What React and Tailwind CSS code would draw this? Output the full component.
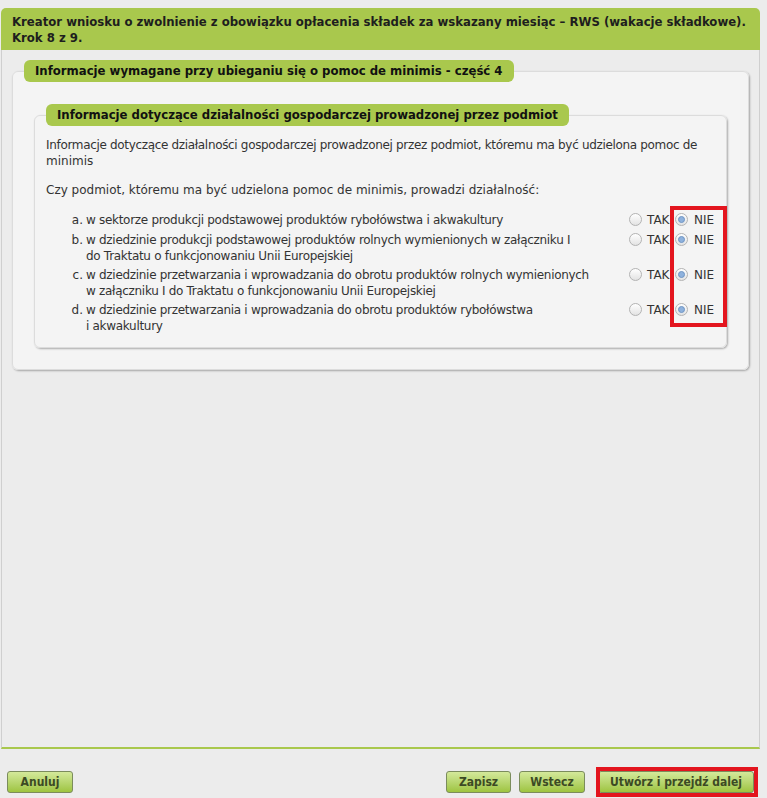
import React from 'react';

const items = [
  { mark: 'a.', lines: ['w sektorze produkcji podstawowej produktów rybołówstwa i akwakultury'] },
  { mark: 'b.', lines: ['w dziedzinie produkcji podstawowej produktów rolnych wymienionych w załączniku I', 'do Traktatu o funkcjonowaniu Unii Europejskiej'] },
  { mark: 'c.', lines: ['w dziedzinie przetwarzania i wprowadzania do obrotu produktów rolnych wymienionych', 'w załączniku I do Traktatu o funkcjonowaniu Unii Europejskiej'] },
  { mark: 'd.', lines: ['w dziedzinie przetwarzania i wprowadzania do obrotu produktów rybołówstwa', 'i akwakultury'] },
];

const boldFont = "font-['DejaVu_Sans_Condensed','Liberation_Sans',sans-serif] font-bold";

const Radio = ({ checked }) => (
  <span className="mt-[1px] flex h-[13px] w-[13px] shrink-0 items-center justify-center rounded-full border border-[#b3b3b3] bg-gradient-to-b from-[#ffffff] to-[#e3e3e3]">
    {checked && <span className="h-[7px] w-[7px] rounded-full border border-[#6f95c4] bg-[#8fb2dd]" />}
  </span>
);

const Button = ({ children, w }) => (
  <button
    className={`${w} h-[22px] rounded-[3px] border border-[#7b8c5c] bg-gradient-to-b from-[#d4e99a] to-[#9ec43e] text-[12px] text-[#3c4a24] ${boldFont}`}
  >
    {children}
  </button>
);

export default function App() {
  return (
    <div className="relative min-h-[798px] bg-[#ececec] font-['DejaVu_Sans',sans-serif] text-[12px] text-[#333]">
      <div className="w-[760px] pl-[1px] pt-[8px]">
        {/* Header */}
        <div className={`rounded-t-[5px] bg-[#a9c84d] pb-[4px] pl-[11px] pr-[8px] pt-[6px] text-[13px] leading-[16px] text-[#1e1e1e] ${boldFont}`}>
          Kreator wniosku o zwolnienie z obowiązku opłacenia składek za wskazany miesiąc – RWS (wakacje składkowe).
          <br />
          Krok 8 z 9.
        </div>

        {/* Body */}
        <div className="h-[699px] border-x border-b-2 border-x-[#cfcfcf] border-b-[#a9c84d] bg-[#ececec] px-[10px] pt-[10px]">
          <fieldset className="min-w-0 rounded-[6px] border border-[#dcdcdc] bg-[#f4f4f4] pb-[21px] pl-[11px] shadow-[1px_1px_2px_rgba(0,0,0,0.3)]">
            <legend className={`h-[22px] rounded-[6px] bg-[#a9c84d] px-[11px] text-[13px] leading-[22px] text-[#111] ${boldFont}`}>
              Informacje wymagane przy ubieganiu się o pomoc de minimis - część 4
            </legend>

            <fieldset className="ml-[10px] mr-[21px] mt-[22px] min-w-0 rounded-[6px] border border-[#dcdcdc] bg-[#f4f4f4] px-[11px] pb-[13px] shadow-[1px_1px_2px_rgba(0,0,0,0.3)]">
              <legend className={`h-[22px] rounded-[6px] bg-[#a9c84d] px-[11px] text-[13px] leading-[22px] text-[#111] ${boldFont}`}>
                Informacje dotyczące działalności gospodarczej prowadzonej przez podmiot
              </legend>

              <div className="pt-[11px] leading-[16px]">
                <p className="whitespace-nowrap">
                  <span className="tracking-[-0.33px]">
                    Informacje dotyczące działalności gospodarczej prowadzonej przez podmiot, któremu ma być udzielona pomoc de
                  </span>
                  <br />
                  minimis
                </p>
                <p className="mt-[13px]">Czy podmiot, któremu ma być udzielona pomoc de minimis, prowadzi działalność:</p>

                <div className="mt-[14px] flex flex-col gap-[3px]">
                  {items.map((it, i) => (
                    <div key={it.mark} className={`flex items-start ${i === 0 ? 'pb-[1px]' : ''}`}>
                      <span className="w-[37px] shrink-0 text-right">{it.mark}</span>
                      <span className="ml-[3px] min-w-0 flex-1 whitespace-nowrap tracking-[-0.3px]">
                        {it.lines.map((l, j) => (
                          <span key={j} className="block">{l}</span>
                        ))}
                      </span>
                      <div className="flex w-[86px] shrink-0 items-start">
                        <Radio />
                        <span className="ml-[5px] w-[28px]">TAK</span>
                        <Radio checked />
                        <span className="ml-[6px]">NIE</span>
                      </div>
                    </div>
                  ))}
                </div>
              </div>
            </fieldset>
          </fieldset>
        </div>
      </div>

      {/* Buttons */}
      <div className="mt-[22px] flex items-start pl-[7px]">
        <Button w="w-[66px]">Anuluj</Button>
        <div className="ml-auto mr-[13px] flex gap-[8px]">
          <Button w="w-[65px]">Zapisz</Button>
          <Button w="w-[66px]">Wstecz</Button>
          <span className="ml-[5px]">
            <Button w="w-[156px]">Utwórz i przejdź dalej</Button>
          </span>
        </div>
      </div>

      {/* annotation overlays */}
      <div className="pointer-events-none absolute left-[670px] top-[206px] h-[121px] w-[57px] border-[4px] border-[#e3151e]" />
      <div className="pointer-events-none absolute left-[596px] top-[767px] h-[30px] w-[162px] border-[4px] border-[#e3151e]" />
    </div>
  );
}
